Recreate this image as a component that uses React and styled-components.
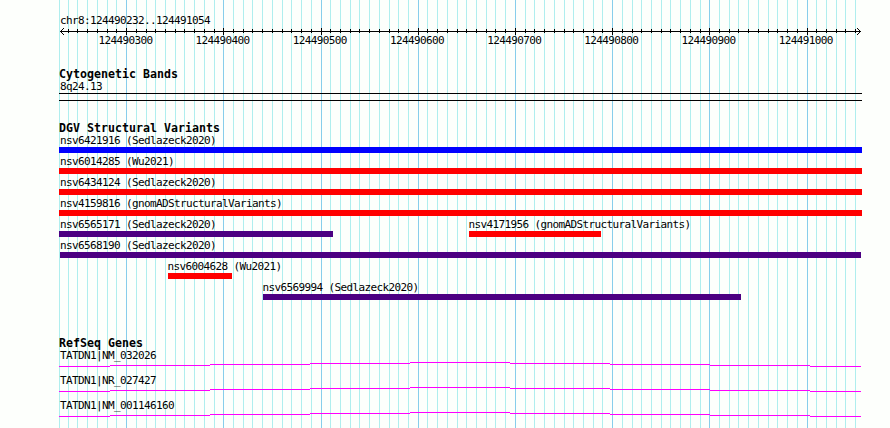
import React from "react";
import styled, { createGlobalStyle } from "styled-components";

const GlobalStyle = createGlobalStyle`
  html, body { margin: 0; padding: 0; background: #fdfffc; overflow: hidden; }
`;

const START = 124490232;
const LEFT = 59;
const toX = (bp) => Math.max(LEFT, Math.round(60 + ((bp - START) * 800) / 823));
const marks = Array.from({ length: 83 }, (_, i) => {
  const bp = 124490230 + i * 10;
  return { bp, x: toX(bp), major: bp % 100 === 0 };
});

const Browser = styled.main`
  position: relative;
  box-sizing: border-box;
  width: 890px;
  height: 428px;
  padding: 15px 28px 0 59px;
  overflow: hidden;
  background: #fdfffc;
  color: #000;
  font-family: "DejaVu Sans Mono", monospace;
`;

const GridLines = styled.svg`
  position: absolute;
  inset: 0;
  shape-rendering: crispEdges;
`;

const Content = styled.div`
  position: relative;
`;

const Label = styled.div`
  height: 12px;
  margin-left: ${(p) => p.$indent ?? 1}px;
  font-size: 11px;
  letter-spacing: -0.622px;
  line-height: 12px;
  white-space: pre;
`;

const Heading = styled.h2`
  height: 13px;
  margin: 0;
  font-size: 11.6px;
  font-weight: 700;
  letter-spacing: 0.016px;
  line-height: 13px;
  white-space: pre;
`;

const Axis = styled.svg`
  display: block;
  height: 8px;
  shape-rendering: crispEdges;
`;

const Scale = styled.div`
  display: grid;
  grid-template-columns: repeat(8, 97.2px);
  height: 13px;
  margin-left: 17.8px;
  text-align: center;
`;

const ScaleLabel = styled(Label)`
  margin-left: 0;
`;

const Track = styled.section`
  margin-top: ${(p) => p.$gap}px;
`;

const Band = styled.div`
  height: 6px;
  border: solid #000;
  border-width: 1px 0;
`;

const VariantRow = styled.div`
  display: flex;
  height: 21px;
`;

const Variant = styled.div`
  flex: none;
  width: ${(p) => p.$width}px;
  margin-left: ${(p) => p.$offset}px;
`;

const Bar = styled.div`
  height: 6px;
  background: ${(p) => p.$color};
`;

const Gene = styled.div`
  height: 25px;
`;

const Intron = styled.svg`
  display: block;
  height: 5px;
  shape-rendering: crispEdges;
`;

const BLUE = "#0000ff";
const RED = "#ff0000";
const INDIGO = "#4b0082";

const rows = [
  [{ name: "nsv6421916 (Sedlazeck2020)", from: 59, to: 862, color: BLUE }],
  [{ name: "nsv6014285 (Wu2021)", from: 59, to: 862, color: RED }],
  [{ name: "nsv6434124 (Sedlazeck2020)", from: 59, to: 862, color: RED }],
  [{ name: "nsv4159816 (gnomADStructuralVariants)", from: 59, to: 862, color: RED }],
  [
    { name: "nsv6565171 (Sedlazeck2020)", from: 59, to: 333, color: INDIGO },
    { name: "nsv4171956 (gnomADStructuralVariants)", from: 469, to: 601, color: RED, indent: -0.5 },
  ],
  [{ name: "nsv6568190 (Sedlazeck2020)", from: 60, to: 861, color: INDIGO, indent: 0 }],
  [{ name: "nsv6004628 (Wu2021)", from: 168, to: 232, color: RED, indent: -0.5 }],
  [{ name: "nsv6569994 (Sedlazeck2020)", from: 263, to: 741, color: INDIGO, indent: -0.5 }],
];

const genes = ["TATDN1|NM_032026", "TATDN1|NR_027427", "TATDN1|NM_001146160"];

function RulerAxis() {
  return (
    <Axis width="803" height="8" viewBox="59 27 803 8">
      <rect x="60" y="31" width="801" height="1" />
      {marks.filter((m) => m.x > LEFT).map((m) => (
        <rect key={m.bp} x={m.x} y={m.major ? 28 : 29} width="1" height={m.major ? 7 : 4} />
      ))}
      {[1, 2, 3].map((d) => (
        <React.Fragment key={d}>
          <rect x={60 + d} y={31 - d} width="1" height="1" />
          <rect x={60 + d} y={31 + d} width="1" height="1" />
          <rect x={860 - d} y={31 - d} width="1" height="1" />
          <rect x={860 - d} y={31 + d} width="1" height="1" />
        </React.Fragment>
      ))}
    </Axis>
  );
}

export default function App() {
  return (
    <Browser>
      <GlobalStyle />
      <GridLines width="890" height="428">
        {marks.map((m) => (
          <rect key={m.bp} x={m.x} y="0" width="1" height="428" fill={m.major ? "#87ceeb" : "#afeeee"} />
        ))}
      </GridLines>
      <Content>
        <Label>chr8:124490232..124491054</Label>
        <RulerAxis />
        <Scale>
          {marks.filter((m) => m.major).map((m) => (
            <ScaleLabel key={m.bp}>{m.bp}</ScaleLabel>
          ))}
        </Scale>

        <Track $gap={20}>
          <Heading>Cytogenetic Bands</Heading>
          <Label>8q24.13</Label>
          <Band />
        </Track>

        <Track $gap={21}>
          <Heading>DGV Structural Variants</Heading>
          {rows.map((row) => (
            <VariantRow key={row[0].name}>
              {row.map((v, i) => (
                <Variant
                  key={v.name}
                  $offset={v.from - (i ? row[i - 1].to : LEFT)}
                  $width={v.to - v.from}
                >
                  <Label $indent={v.indent}>{v.name}</Label>
                  <Bar $color={v.color} />
                </Variant>
              ))}
            </VariantRow>
          ))}
        </Track>

        <Track $gap={34}>
          <Heading>RefSeq Genes</Heading>
          {genes.map((gene) => (
            <Gene key={gene}>
              <Label>{gene}</Label>
              <Intron width="803" height="5" viewBox="59 0 803 5">
                {[4, 3, 2, 1, 0, 1, 2, 3, 4].map((y, i) => {
                  const from = i ? 10 + i * 100 : 59;
                  const to = Math.min(110 + i * 100, 861);
                  return <rect key={i} x={from} y={y} width={to - from} height="1" fill="#ff00ff" />;
                })}
              </Intron>
            </Gene>
          ))}
        </Track>
      </Content>
    </Browser>
  );
}
